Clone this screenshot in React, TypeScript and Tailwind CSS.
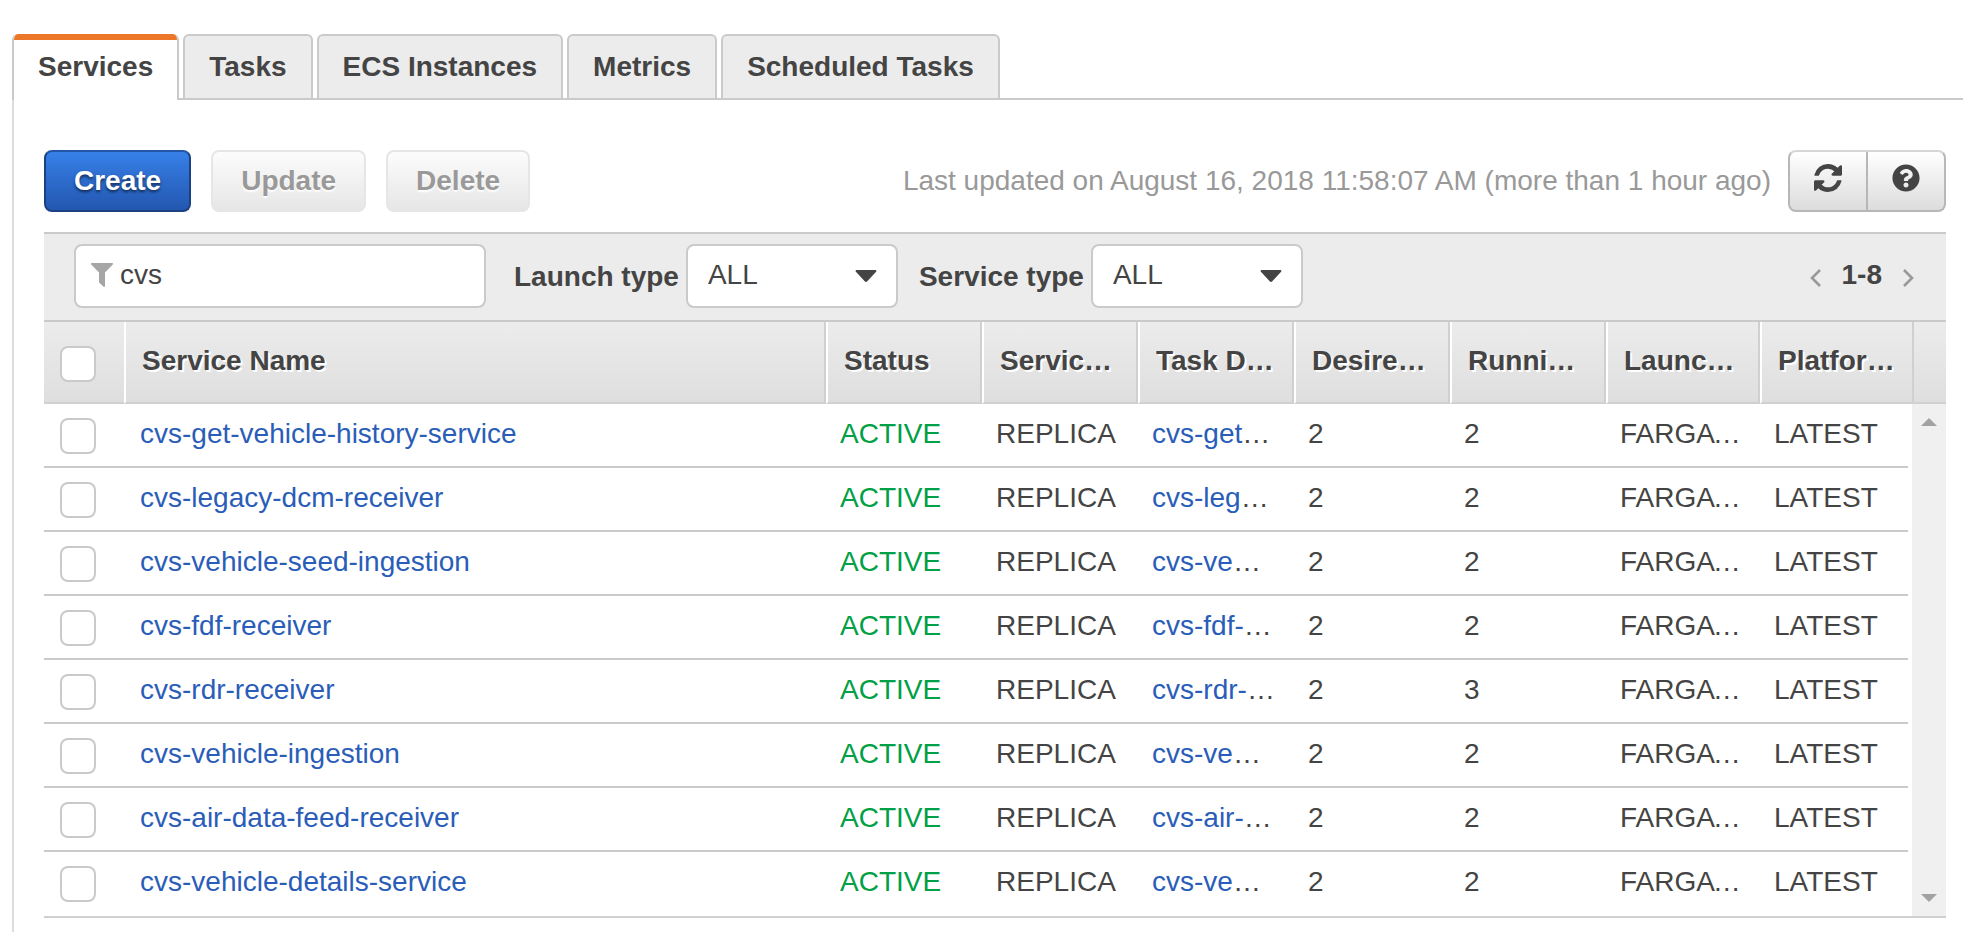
import { useState, type ReactNode } from "react";
import { FaQuestionCircle } from "react-icons/fa";

type Service = { name: string; task: string; running: number };

const services: Service[] = [
  { name: "cvs-get-vehicle-history-service", task: "cvs-get-vehicle", running: 2 },
  { name: "cvs-legacy-dcm-receiver", task: "cvs-legacy-dcm", running: 2 },
  { name: "cvs-vehicle-seed-ingestion", task: "cvs-vehicle-seed", running: 2 },
  { name: "cvs-fdf-receiver", task: "cvs-fdf-receiver", running: 2 },
  { name: "cvs-rdr-receiver", task: "cvs-rdr-receiver", running: 3 },
  { name: "cvs-vehicle-ingestion", task: "cvs-vehicle", running: 2 },
  { name: "cvs-air-data-feed-receiver", task: "cvs-air-data", running: 2 },
  { name: "cvs-vehicle-details-service", task: "cvs-vehicle", running: 2 },
];

const tabs = ["Services", "Tasks", "ECS Instances", "Metrics", "Scheduled Tasks"];

const columns = [
  { title: "Service Name", width: "" },
  { title: "Status", width: "w-[156px]" },
  { title: "Service type", width: "w-[156px]" },
  { title: "Task Definition", width: "w-[156px]" },
  { title: "Desired tasks", width: "w-[156px]" },
  { title: "Running tasks", width: "w-[156px]" },
  { title: "Launch type", width: "w-[154px]" },
  { title: "Platform version", width: "w-[148px]" },
];

function Checkbox({ label }: { label: string }) {
  return (
    <input
      type="checkbox"
      aria-label={label}
      className="block size-9 appearance-none rounded-lg border-2 border-[#cacaca] bg-white checked:bg-[#2a5db8]"
    />
  );
}

function Tab({ title, active, onSelect }: { title: string; active: boolean; onSelect: () => void }) {
  if (active) {
    return (
      <button
        type="button"
        role="tab"
        aria-selected="true"
        onClick={onSelect}
        className="flex h-[66px] flex-col overflow-hidden rounded-t-md border-x-2 border-[#cacaca] bg-white font-bold"
      >
        <span className="h-1.5 self-stretch bg-[#ec7728]" />
        <span className="px-6 pt-[7px] leading-10">{title}</span>
      </button>
    );
  }
  return (
    <div className="flex border-b-2 border-[#cacaca] pl-1">
      <button
        type="button"
        role="tab"
        aria-selected="false"
        onClick={onSelect}
        className="h-16 rounded-t-md border-2 border-b-0 border-[#cacaca] bg-[#ececec] px-6 font-bold"
      >
        {title}
      </button>
    </div>
  );
}

function DisabledButton({ children }: { children: ReactNode }) {
  return (
    <button
      type="button"
      disabled
      className="h-[62px] rounded-lg border-2 border-[#e6e6e6] bg-linear-to-b from-[#fcfcfc] to-[#e6e6e6] px-7 font-bold text-[#999] [text-shadow:0_2px_2px_#fff]"
    >
      {children}
    </button>
  );
}

function FilterSelect({ id, label }: { id: string; label: string }) {
  return (
    <div className="flex items-center gap-[7px]">
      <label htmlFor={id} className="pt-0.5 font-bold">
        {label}
      </label>
      <div className="grid items-center">
        <select
          id={id}
          className="col-start-1 row-start-1 h-16 w-[212px] appearance-none rounded-lg border-2 border-[#cacaca] bg-white pr-12 pb-0.5 pl-5"
        >
          <option>ALL</option>
          <option>FARGATE</option>
        </select>
        <svg
          viewBox="0 0 22 12"
          className="pointer-events-none col-start-1 row-start-1 mr-[21px] h-3 w-[22px] justify-self-end fill-[#444]"
        >
          <path d="M1.6 0h18.8c1 0 1.3 1 .7 1.700l-8.800 9.600c-.8.8-1.800.8-2.600 0L.9 1.700C.3 1 .6 0 1.600 0z" />
        </svg>
      </div>
    </div>
  );
}

function Chevron({ d, label }: { d: string; label: string }) {
  return (
    <button type="button" aria-label={label} className="pt-1">
      <svg viewBox="0 0 12 18" className="h-[18px] w-3 fill-none stroke-[#999] stroke-[2.6]">
        <path d={d} />
      </svg>
    </button>
  );
}

export default function App() {
  const [active, setActive] = useState("Services");
  const [filter, setFilter] = useState("cvs");

  return (
    <main className="bg-white pt-[34px] pl-3 font-['Liberation_Sans',Arial,sans-serif] text-[28px] leading-10 text-[#444]">
      <div role="tablist" className="flex">
        {tabs.map((t) => (
          <Tab key={t} title={t} active={t === active} onSelect={() => setActive(t)} />
        ))}
        <div className="flex-1 border-b-2 border-[#cacaca]" />
      </div>

      <section className="border-l-2 border-[#ddd] pt-[50px] pr-[17px] pb-[14px] pl-[30px]">
        <div className="flex items-center justify-between pb-5">
          <div className="flex gap-5">
            <button
              type="button"
              className="h-[62px] rounded-lg border-2 border-[#1c4182] border-t-[#2456a8] bg-linear-to-b from-[#3780e8] to-[#2357b0] px-7 font-bold text-white [text-shadow:0_2px_3px_#0009]"
            >
              Create
            </button>
            <DisabledButton>Update</DisabledButton>
            <DisabledButton>Delete</DisabledButton>
          </div>
          <div className="flex items-center gap-[17px]">
            <p className="whitespace-nowrap text-[#999]">
              Last updated on August 16, 2018 11:58:07 AM (more than 1 hour ago)
            </p>
            <div className="flex h-[62px] divide-x-2 divide-[#b7b7b7] rounded-lg border-2 border-[#b7b7b7] border-t-[#d6d6d6] bg-linear-to-b from-white to-[#dcdcdc]">
              <button type="button" aria-label="Refresh" className="flex w-[78px] justify-center pt-3">
                <svg viewBox="0 0 1536 1536" className="size-7 fill-[#444]">
                  <path d="M1511 928q0 5-1 7-64 268-268 434.500T764 1536q-146 0-282.500-55T238 1324l-129 129q-19 19-45 19t-45-19-19-45V960q0-26 19-45t45-19h448q26 0 45 19t19 45-19 45l-137 137q71 66 161 102t187 36q134 0 250-65t186-179q11-17 53-117 8-23 30-23h192q13 0 22.500 9.500t9.500 22.500zm25-800v448q0 26-19 45t-45 19h-448q-26 0-45-19t-19-45 19-45l138-138Q969 256 768 256q-134 0-250 65T332 500q-11 17-53 117-8 23-30 23H50q-13 0-22.500-9.500T18 608v-7q65-268 270-434.500T768 0q146 0 284 55.500T1297 212l130-129q19-19 45-19t45 19 19 45z" />
                </svg>
              </button>
              <button type="button" aria-label="Help" className="flex w-[76px] justify-center pt-3">
                <FaQuestionCircle className="size-7" />
              </button>
            </div>
          </div>
        </div>

        <div className="flex items-center border-y-2 border-y-[#cacaca] bg-[#ececec] pt-2.5 pr-8 pb-3 pl-[30px]">
          <label className="mr-7 flex h-16 w-[412px] items-center rounded-lg border-2 border-[#cacaca] bg-white pr-4 pb-0.5 pl-[15px]">
            <svg viewBox="0 0 22 24" className="h-6 w-[22px] shrink-0 fill-[#a6a6a6]">
              <path d="M.8 0h20.4c.8 0 1.100.9.6 1.500L14 9.400V23c0 .8-.8 1.200-1.400.7l-4-3.600c-.4-.4-.6-.8-.6-1.300V9.400L.2 1.500C-.3.900 0 0 .8 0z" />
            </svg>
            <input
              aria-label="Filter services"
              value={filter}
              onChange={(e) => setFilter(e.target.value)}
              className="ml-[7px] min-w-0 flex-1 bg-transparent outline-none"
            />
          </label>
          <div className="flex gap-[21px]">
            <FilterSelect id="launch-type" label="Launch type" />
            <FilterSelect id="service-type" label="Service type" />
          </div>
          <div className="ml-auto flex items-center gap-5">
            <Chevron label="Previous page" d="M10 1 2 9l8 8" />
            <span className="pb-0.5 font-bold">1-8</span>
            <Chevron label="Next page" d="m2 1 8 8-8 8" />
          </div>
        </div>

        <table className="w-full table-fixed border-separate border-spacing-0 border-b-2 border-[#d0d0d0] text-left">
          <thead className="bg-linear-to-b from-[#ececec] to-[#dedede]">
            <tr>
              <th className="w-20 border-b-2 border-[#d0d0d0] pt-1 pl-4">
                <Checkbox label="Select all services" />
              </th>
              {columns.map((c, i) => (
                <th
                  key={c.title}
                  className={`${c.width} ${i === columns.length - 1 ? "pr-2.5" : "border-r-2 border-r-[#d0d0d0] pr-4"} truncate border-b-2 border-l-2 border-b-[#d0d0d0] border-l-white pt-[19px] pb-[21px] pl-4 font-bold [text-shadow:2px_2px_0_#fff]`}
                >
                  {c.title}
                </th>
              ))}
              <th aria-hidden="true" className="w-[38px] border-b-2 border-[#d0d0d0] p-0">
                <div className="ml-1 h-20 border-l-2 border-[#d0d0d0]" />
              </th>
            </tr>
          </thead>
          <tbody>
            {services.map((s, i) => {
              const line = i < services.length - 1 ? "border-b-2 border-[#cacaca]" : "border-b-2 border-transparent";
              const cell = `${line} truncate pt-2.5 pb-3 pl-3.5 pr-[18px]`;
              return (
                <tr key={s.name} className="h-16">
                  <td className={`${line} pt-0.5 pl-4`}>
                    <Checkbox label={`Select ${s.name}`} />
                  </td>
                  <td className={`${line} truncate px-4 pt-2.5 pb-3`}>
                    <a href="#service" className="text-[#2a5db8]">
                      {s.name}
                    </a>
                  </td>
                  <td className={`${cell} text-[#00a046]`}>ACTIVE</td>
                  <td className={cell}>REPLICA</td>
                  <td className={cell}>
                    <a href="#task" className="text-[#2a5db8]">
                      {s.task}
                    </a>
                  </td>
                  <td className={cell}>2</td>
                  <td className={cell}>{s.running}</td>
                  <td className={`${line} truncate px-3.5 pt-2.5 pb-3`}>FARGATE</td>
                  <td className={cell}>LATEST</td>
                  {i === 0 && (
                    <td rowSpan={services.length} aria-hidden="true" className="p-0">
                      <div className="ml-1 flex h-[512px] flex-col items-center justify-between bg-[#f0f0f0] py-3.5">
                        <svg viewBox="0 0 16 8" className="h-2 w-4 fill-[#a2a2a2]">
                          <path d="m0 8 8-8 8 8z" />
                        </svg>
                        <svg viewBox="0 0 16 8" className="h-2 w-4 fill-[#a2a2a2]">
                          <path d="m0 0 8 8 8-8z" />
                        </svg>
                      </div>
                    </td>
                  )}
                </tr>
              );
            })}
          </tbody>
        </table>
      </section>
    </main>
  );
}
